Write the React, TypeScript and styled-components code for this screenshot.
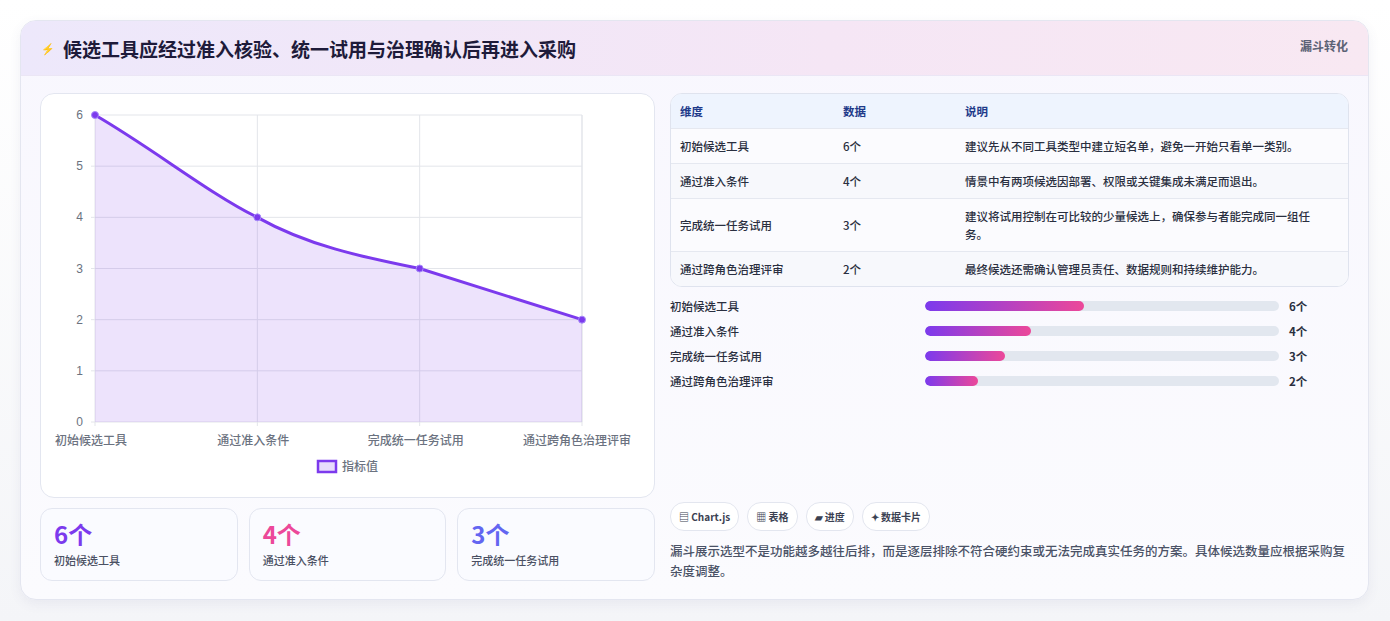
import React from 'react'
import styled, { createGlobalStyle } from 'styled-components'

const Global = createGlobalStyle`
  body { margin: 0; background: #f3f4f8; font-family: "Noto Sans CJK SC", "Noto Sans", sans-serif; }
`

const Page = styled.div`
  padding: 20px 21px 22px 20px;
  height: 621px;
  box-sizing: border-box;
  background: linear-gradient(#fff, #f4f5f8);
`

const Card = styled.div`
  border: 1px solid #e4e6f0;
  border-radius: 16px;
  overflow: hidden;
  background: linear-gradient(180deg, #f8f7fe 0%, #fbfbfe 100%);
  box-shadow: 0 4px 12px rgba(90, 90, 140, 0.08);
`

const Header = styled.div`
  height: 54px;
  display: flex;
  align-items: center;
  justify-content: space-between;
  padding: 0 20px;
  background: linear-gradient(90deg, #ede8fb 0%, #f5e6f5 60%, #f8e8f2 100%);
  border-bottom: 1px solid #ebe6f5;
`

const Title = styled.h1`
  margin: 0;
  font-size: 19px;
  font-weight: 700;
  color: #1e1b3a;
  display: flex;
  align-items: center;
  gap: 8px;
`

const Tag = styled.span`
  align-self: flex-start;
  margin-top: 16px;
  font-size: 12px;
  font-weight: 700;
  color: #5b6275;
`

const Body = styled.div`
  display: grid;
  grid-template-columns: 615px 1fr;
  gap: 15px;
  padding: 17px 19px 18px 19px;
`

const Col = styled.div`
  display: flex;
  flex-direction: column;
`

const ChartBox = styled.div`
  height: 403px;
  border: 1px solid #e3e6f0;
  border-radius: 14px;
  background: #fff;
`

const Stats = styled.div`
  margin-top: 10px;
  display: grid;
  grid-template-columns: repeat(3, 1fr);
  gap: 11px;
`

const Stat = styled.div`
  height: 73px;
  border: 1px solid #e3e6f0;
  border-radius: 12px;
  background: #fafbff;
  padding: 11px 13px;
  box-sizing: border-box;
`

const StatNum = styled.div<{ $c: string }>`
  font-size: 24px;
  font-weight: 700;
  color: ${p => p.$c};
  line-height: 28px;
`

const StatLabel = styled.div`
  font-size: 11px;
  font-weight: 500;
  color: #4a5063;
  margin-top: 4px;
`

const Table = styled.div`
  border: 1px solid #dfe3ee;
  border-radius: 12px;
  overflow: hidden;
  background: #fff;
`

const Row = styled.div<{ $head?: boolean; $alt?: boolean }>`
  display: grid;
  grid-template-columns: 163px 122px 1fr;
  padding: 0 24px 0 9px;
  min-height: 34px;
  align-items: center;
  font-size: 11.5px;
  line-height: 18px;
  color: ${p => (p.$head ? '#1e3a8a' : '#2a2f40')};
  font-weight: ${p => (p.$head ? 700 : 500)};
  background: ${p => (p.$head ? '#eef4fe' : p.$alt ? '#f7f8fc' : '#fbfbfe')};
  border-top: ${p => (p.$head ? 'none' : '1px solid #e5e8f0')};
  & > div { padding: 8px 0; }
`

const Bars = styled.div`
  margin-top: 10px;
  display: flex;
  flex-direction: column;
  gap: 7px;
`

const BarRow = styled.div`
  display: grid;
  grid-template-columns: 255px 354px 1fr;
  align-items: center;
  font-size: 11.5px;
  font-weight: 500;
  color: #2a2f40;
  height: 18px;
`

const Track = styled.div`
  height: 10px;
  border-radius: 5px;
  background: #e2e7ef;
  overflow: hidden;
`

const Fill = styled.div`
  height: 100%;
  border-radius: 5px;
  background: linear-gradient(90deg, #7c3aed, #ec4899);
`

const BarVal = styled.span`
  padding-left: 10px;
  font-weight: 700;
`

const Chips = styled.div`
  margin-top: auto;
  display: flex;
  gap: 8px;
`

const Chip = styled.span`
  font-size: 10px;
  font-weight: 700;
  color: #3b4152;
  border: 1px solid #e3e6ef;
  background: #fff;
  border-radius: 14px;
  padding: 6px 8px;
`

const Note = styled.p`
  margin: 10px 0 0;
  font-size: 12.5px;
  line-height: 20px;
  color: #4a5266;
  font-weight: 500;
`

const data = [
  { name: '初始候选工具', v: 6, note: '建议先从不同工具类型中建立短名单，避免一开始只看单一类别。' },
  { name: '通过准入条件', v: 4, note: '情景中有两项候选因部署、权限或关键集成未满足而退出。' },
  { name: '完成统一任务试用', v: 3, note: '建议将试用控制在可比较的少量候选上，确保参与者能完成同一组任务。' },
  { name: '通过跨角色治理评审', v: 2, note: '最终候选还需确认管理员责任、数据规则和持续维护能力。' },
]

function Chart() {
  const x0 = 54, x1 = 541, y0 = 21, y1 = 328
  const xs = [0, 1, 2, 3].map(i => x0 + ((x1 - x0) * i) / 3)
  const yOf = (v: number) => y1 - ((y1 - y0) * v) / 6
  const pts = data.map((d, i) => [xs[i], yOf(d.v)])
  const line = `M${pts[0][0]},${pts[0][1]} C${pts[0][0] + 60},${pts[0][1] + 35} ${pts[1][0] - 50},${pts[1][1] - 25} ${pts[1][0]},${pts[1][1]} C${pts[1][0] + 50},${pts[1][1] + 28} ${pts[2][0] - 60},${pts[2][1] - 12} ${pts[2][0]},${pts[2][1]} L${pts[3][0]},${pts[3][1]}`
  return (
    <svg width="615" height="403" style={{ display: 'block' }}>
      {[0, 1, 2, 3, 4, 5, 6].map(v => (
        <g key={v}>
          <line x1={x0 - 4} x2={x1} y1={yOf(v)} y2={yOf(v)} stroke="#e3e5ea" />
          <text x={x0 - 12} y={yOf(v) + 4} fontSize="12" fill="#6b7280" textAnchor="end" fontFamily="Liberation Sans">{v}</text>
        </g>
      ))}
      {xs.map((x, i) => (
        <g key={i}>
          <line x1={x} x2={x} y1={y0} y2={y1 + 4} stroke="#e3e5ea" />
          <text x={i === 0 ? x - 40 : i === 3 ? x - 59 : i === 2 ? x - 52 : x - 40} y={y1 + 23} fontSize="12" fontWeight="500" fill="#6b7280">{data[i].name}</text>
        </g>
      ))}
      <line x1={x1} x2={x1} y1={y0} y2={y1} stroke="#e3e5ea" />
      <path d={`${line} L${x1},${y1} L${x0},${y1} Z`} fill="rgba(124,58,237,0.14)" />
      <path d={line} fill="none" stroke="#7c3aed" strokeWidth="3" />
      {pts.map((p, i) => <circle key={i} cx={p[0]} cy={p[1]} r="3.5" fill="#7c3aed" stroke="#a78bfa" strokeWidth="1" />)}
      <rect x="277" y="367" width="18" height="11" fill="rgba(124,58,237,0.18)" stroke="#7c3aed" strokeWidth="2.5" />
      <text x="301" y="377" fontSize="12" fontWeight="500" fill="#6b7280">指标值</text>
    </svg>
  )
}

export default function App() {
  const stats = [
    { c: '#7c3aed', v: '6个', l: '初始候选工具' },
    { c: '#ec4899', v: '4个', l: '通过准入条件' },
    { c: '#6366f1', v: '3个', l: '完成统一任务试用' },
  ]
  return (
    <Page>
      <Global />
      <Card>
        <Header>
          <Title><span style={{ color: '#4f46e5', fontSize: 11 }}>⚡</span>候选工具应经过准入核验、统一试用与治理确认后再进入采购</Title>
          <Tag>漏斗转化</Tag>
        </Header>
        <Body>
          <Col>
            <ChartBox><Chart /></ChartBox>
            <Stats>
              {stats.map(s => (
                <Stat key={s.l}>
                  <StatNum $c={s.c}>{s.v}</StatNum>
                  <StatLabel>{s.l}</StatLabel>
                </Stat>
              ))}
            </Stats>
          </Col>
          <Col>
            <Table>
              <Row $head><div>维度</div><div>数据</div><div>说明</div></Row>
              {data.map((d, i) => (
                <Row key={d.name} $alt={i % 2 === 1}>
                  <div>{d.name}</div><div>{d.v}个</div><div>{d.note}</div>
                </Row>
              ))}
            </Table>
            <Bars>
              {data.map(d => (
                <BarRow key={d.name}>
                  <span>{d.name}</span>
                  <Track><Fill style={{ width: `${d.v * 7.5}%` }} /></Track>
                  <BarVal>{d.v}个</BarVal>
                </BarRow>
              ))}
            </Bars>
            <Chips>
              <Chip>▤ Chart.js</Chip>
              <Chip>▦ 表格</Chip>
              <Chip>▰ 进度</Chip>
              <Chip>✦ 数据卡片</Chip>
            </Chips>
            <Note>漏斗展示选型不是功能越多越往后排，而是逐层排除不符合硬约束或无法完成真实任务的方案。具体候选数量应根据采购复杂度调整。</Note>
          </Col>
        </Body>
      </Card>
    </Page>
  )
}
